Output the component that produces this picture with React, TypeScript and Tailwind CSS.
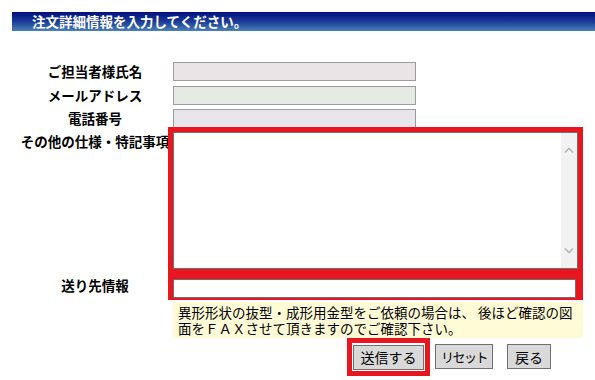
import React from "react";

const font = { fontFamily: '"Noto Sans CJK JP", "Noto Sans", sans-serif' };

function Label({ children, top = false }: { children: React.ReactNode; top?: boolean }) {
  return (
    <div
      className={`w-[150px] shrink-0 text-center text-[13.5px] font-bold leading-[19px] text-black whitespace-nowrap ${
        top ? "self-start pt-[5px]" : ""
      }`}
    >
      {children}
    </div>
  );
}

export default function App() {
  return (
    <div className="w-[595px] h-[380px] bg-white overflow-hidden" style={font}>
      {/* header bar */}
      <div className="pt-3 pl-3">
        <div className="h-[19px] bg-gradient-to-b from-[#050a7e] via-[#1c3a96] to-[#4a82b6] pl-5 text-[13.5px] font-bold leading-[19px] text-white">
          注文詳細情報を入力してください。
        </div>
      </div>

      <div className="pl-5 pt-[31px] flex flex-col">
        <div className="flex items-center">
          <Label>ご担当者様氏名</Label>
          <input className="ml-[3px] w-[243px] h-[19px] border border-[#9c9c9c] bg-[#ebe4e6] outline-none" />
        </div>
        <div className="flex items-center mt-[5px]">
          <Label>メールアドレス</Label>
          <input className="ml-[3px] w-[243px] h-[19px] border border-[#9c9c9c] bg-[#e4eae4] outline-none" />
        </div>
        <div className="flex items-center mt-[4px]">
          <Label>電話番号</Label>
          <input className="ml-[3px] w-[243px] h-[19px] border border-[#9c9c9c] bg-[#e6e6ec] outline-none" />
        </div>

        {/* notes textarea */}
        <div className="flex -mt-px">
          <Label top>その他の仕様・特記事項</Label>
          <div className="-ml-[2px] w-[415px] h-[147px] border-[5px] border-[#e8161f] flex bg-white">
            <div className="flex-1 flex border border-[#6e6e6e]">
              <textarea className="flex-1 resize-none outline-none bg-white" />
              <div className="w-[16px] bg-[#f2f2f2] flex flex-col items-center justify-between py-[14px]">
                <svg width="10" height="6" viewBox="0 0 10 6" fill="none" stroke="#b8b8b8" strokeWidth="1.6">
                  <path d="M1 5.5 L5 1.5 L9 5.5" />
                </svg>
                <svg width="10" height="6" viewBox="0 0 10 6" fill="none" stroke="#b8b8b8" strokeWidth="1.6">
                  <path d="M1 0.5 L5 4.5 L9 0.5" />
                </svg>
              </div>
            </div>
          </div>
        </div>

        {/* destination */}
        <div className="flex items-center -mt-[3px]">
          <Label>送り先情報</Label>
          <div className="-ml-[2px] w-[415px] h-[29px] border-[5px] border-[#e8161f] bg-[#e8161f] pr-[2px]">
            <input className="w-full h-[19px] border border-[#6e6e6e] bg-white outline-none" />
          </div>
        </div>

        {/* note */}
        <div className="ml-[153px] mt-[2px] w-[410px] bg-[#fffbd6] px-[5px] pt-[2px] pb-[2px] text-[13.5px] leading-[16px] text-black">
          <div>異形形状の抜型・成形用金型をご依頼の場合は、 後ほど確認の図</div>
          <div>面をＦＡＸさせて頂きますのでご確認下さい。</div>
        </div>

        {/* buttons */}
        <div className="flex items-center ml-[327px]">
          <div className="border-[5px] border-[#e8161f] p-px">
            <button className="w-[71px] h-[25px] bg-[#d9d9d9] border border-[#707070] text-[14px] leading-none text-black">
              送信する
            </button>
          </div>
          <button className="ml-[5px] w-[58px] h-[25px] bg-[#d9d9d9] border border-[#707070] text-[13px] leading-none text-black tracking-[-1.5px]">
            リセット
          </button>
          <button className="ml-[14px] w-[44px] h-[25px] bg-[#d9d9d9] border border-[#707070] text-[14px] leading-none text-black">
            戻る
          </button>
        </div>
      </div>
    </div>
  );
}
